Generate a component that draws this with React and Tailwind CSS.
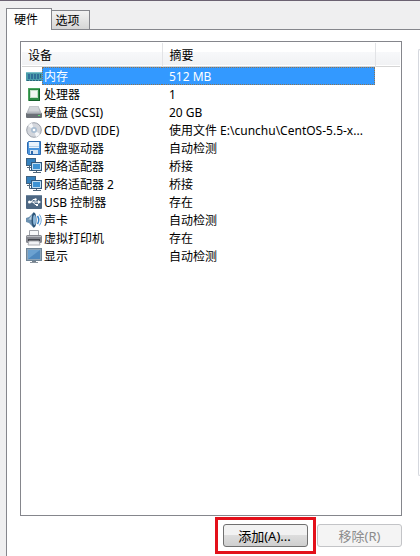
/**
 * HardwareSettings: virtual machine settings, "hardware" tab.
 *
 * Device table with its add / remove buttons.
 */

const DEVICES = [
  { name: '内存', summary: '512 MB', Icon: MemoryIcon },
  { name: '处理器', summary: '1', Icon: CpuIcon },
  { name: '硬盘 (SCSI)', summary: '20 GB', Icon: DiskIcon },
  { name: 'CD/DVD (IDE)', summary: '使用文件 E:\\cunchu\\CentOS-5.5-x...', Icon: DiscIcon },
  { name: '软盘驱动器', summary: '自动检测', Icon: FloppyIcon },
  { name: '网络适配器', summary: '桥接', Icon: NetworkIcon },
  { name: '网络适配器 2', summary: '桥接', Icon: NetworkIcon },
  { name: 'USB 控制器', summary: '存在', Icon: UsbIcon },
  { name: '声卡', summary: '自动检测', Icon: SoundIcon },
  { name: '虚拟打印机', summary: '存在', Icon: PrinterIcon },
  { name: '显示', summary: '自动检测', Icon: DisplayIcon },
]

export default function App() {
  return (
    <main className="flex h-screen flex-col border-t border-[#6b6272] bg-[#efeff0] pl-[6px] pt-[7px] font-['Noto_Sans','Noto_Sans_CJK_SC',sans-serif] text-[12px] leading-[18px] text-black">
      <Tabs />
      <div className="flex flex-1 border-l border-t border-[#85868c] bg-white">
        <section aria-label="硬件" className="flex flex-1 flex-col pl-[13px] pt-[11px]">
          <div className="flex-1 border border-[#85868c] p-px">
            <DeviceTable />
          </div>
          <Actions />
        </section>
        {/* Left edge of the detail pane */}
        <div className="mb-[80px] ml-[16px] mt-[19px] w-[2px] rounded-l-sm border-y border-l border-[#d5d8de]" />
      </div>
    </main>
  )
}

function Tabs() {
  return (
    <div role="tablist" className="flex items-end">
      <button role="tab" aria-selected="true" className="relative -mb-px h-[22px] w-[46px] border-x border-t border-[#85868c] bg-white pr-[6px] pt-px">
        硬件
      </button>
      <button role="tab" aria-selected="false" className="h-[19px] w-[38px] border-r border-t border-[#85868c] bg-linear-to-b from-[#f2f2f2] to-[#d6d6d6] pr-[6px] pt-px">
        选项
      </button>
    </div>
  )
}

function DeviceTable() {
  return (
    <table className="w-full table-fixed border-collapse text-left">
      <colgroup>
        <col className="w-[140px]" />
        <col className="w-[213px]" />
        <col />
      </colgroup>
      <thead>
        <tr className="h-[23px] border-b border-[#d5d5d5] bg-linear-to-b from-white from-40% via-[#f7f8fa] via-40% to-[#f1f2f4]">
          <th className="border-r border-[#e2e3e6] pb-0 pl-[6px] pt-[4px] font-normal">设备</th>
          <th className="border-r border-[#e2e3e6] pb-0 pl-[7px] pt-[4px] font-normal">摘要</th>
          <th />
        </tr>
      </thead>
      <tbody>
        <tr className="h-px" />
        {DEVICES.map((device, i) => (
          <DeviceRow key={device.name} device={device} selected={i === 0} />
        ))}
      </tbody>
    </table>
  )
}

function DeviceRow({ device, selected }) {
  const { name, summary, Icon } = device
  const highlight = selected ? 'border-[#8a7355] bg-[#3399ff] text-white' : 'border-transparent'
  return (
    <tr aria-selected={selected} className="h-[18px] leading-[18px]">
      <td className="p-0">
        <div className="flex h-[18px] items-center pl-[4px]">
          <Icon />
          <span className={`h-[18px] flex-1 whitespace-nowrap border-y border-l border-dotted pl-px ${highlight}`}>
            {name}
          </span>
        </div>
      </td>
      <td className="p-0">
        <div className={`h-[18px] whitespace-nowrap border-y border-r border-dotted pl-[7px] ${highlight}`}>{summary}</div>
      </td>
      <td />
    </tr>
  )
}

function Actions() {
  return (
    <div className="flex items-center justify-end pb-[2px] pt-px">
      <div className="border-[3px] border-[#e3101a] px-[5px] py-[4px]">
        <button className="block h-[23px] w-[85px] rounded-[3px] border border-[#707070] bg-linear-to-b from-[#f2f2f2] from-50% via-[#dddddd] via-50% to-[#cfcfcf] pr-[2px] text-[13px]">
          添加(A)...
        </button>
      </div>
      <button disabled className="ml-px h-[23px] w-[85px] rounded-[3px] border border-[#c3c4c7] bg-[#f4f4f4] text-[13px] text-[#8b8b8b]">
        移除(R)
      </button>
    </div>
  )
}

function IconFrame({ children }) {
  return (
    <svg width="16" height="16" viewBox="0 0 16 16" className="shrink-0" aria-hidden="true">
      {children}
    </svg>
  )
}

function MemoryIcon() {
  return (
    <IconFrame>
      <rect x="0" y="4" width="16" height="9" fill="#4c9daa" />
      <path d="M0 4.5h16" stroke="#7bc0ca" />
      <path d="M2 6h2v5H2zM5 6h2v5H5zM8 6h2v5H8zM11 6h2v5h-2z" fill="#2f6f98" />
      <path d="M1 12.5h14" stroke="#2b6678" strokeDasharray="2 1" />
      <path d="M14.5 6v4" stroke="#2b6678" />
    </IconFrame>
  )
}

function CpuIcon() {
  return (
    <IconFrame>
      <rect x="2" y="2" width="12" height="13" rx="1" fill="#2c8a45" />
      <path d="M2.5 14V2.5H14" fill="none" stroke="#4aa45e" />
      <rect x="4.5" y="4.5" width="7" height="7" fill="#f2f6f2" stroke="#c3dfc7" />
      <path d="M3 14.5h11M13.5 3v11" stroke="#14602a" />
    </IconFrame>
  )
}

function DiskIcon() {
  return (
    <IconFrame>
      <path d="M3.5 2h9L16 10H0z" fill="#b5b9bf" />
      <path d="M4 2.5h8l1.5 5h-11z" fill="#d3d6da" />
      <rect x="0" y="9" width="16" height="5" rx="1" fill="#6b7077" />
      <path d="M1 9.5h14" stroke="#9a9fa6" />
      <path d="M12 11.5h2" stroke="#5fdd72" />
    </IconFrame>
  )
}

function DiscIcon() {
  return (
    <IconFrame>
      <circle cx="8" cy="8" r="7.3" fill="#d3d6dc" stroke="#9ba0aa" />
      <path d="M8 8 2 4a7 7 0 0 1 4-3zM8 8l6 4a7 7 0 0 1-4 3z" fill="#f7f8fa" />
      <circle cx="8" cy="8" r="3" fill="#a9bdd2" />
      <circle cx="8" cy="8" r="1.3" fill="#fff" />
    </IconFrame>
  )
}

function FloppyIcon() {
  return (
    <IconFrame>
      <path d="M1.5 2.5 2.5 1.5h12v13h-12l-1-1z" fill="#4c95dc" stroke="#2d69ae" />
      <rect x="3" y="2" width="10" height="6" fill="#eaf3fc" />
      <path d="M3 6.5h10" stroke="#b4cfe8" />
      <rect x="4" y="10" width="8" height="4" fill="#d7e5f2" />
      <path d="M5 11h2v3H5z" fill="#2d69ae" />
    </IconFrame>
  )
}

function NetworkIcon() {
  return (
    <IconFrame>
      <rect x=".5" y=".5" width="9" height="7" fill="#3480bd" stroke="#3f6180" />
      <path d="M3.5 8v4.5H6M1 9.5h4" fill="none" stroke="#50667b" />
      <rect x="5.500" y="4.500" width="10" height="8" fill="#3f93d3" stroke="#34587a" />
      <path d="M6.500 11.500v-6h8v6z" fill="none" stroke="#c3dff2" />
      <path d="M10.500 13v2M7 14.500h8" stroke="#50667b" />
    </IconFrame>
  )
}

function UsbIcon() {
  return (
    <IconFrame>
      <rect x="0" y="1" width="16" height="14" rx="1" fill="#4d6783" />
      <path d="M1 1.500h14" stroke="#7289a1" />
      <path d="M3 8h10M5 8l2-2.500h2M7 8l2 2.500h2" fill="none" stroke="#fff" />
      <circle cx="3.500" cy="8" r="1.500" fill="#fff" />
      <path d="m12 6 3 2-3 2z" fill="#fff" />
      <circle cx="9.500" cy="5.500" r="1.200" fill="#fff" />
      <path d="M10 10h2v2h-2z" fill="#fff" />
    </IconFrame>
  )
}

function SoundIcon() {
  return (
    <IconFrame>
      <path d="M0 6 3 5l5-5v16l-5-5-3-1z" fill="#6b90b0" />
      <path d="M1 7h2l3-4v5z" fill="#bdd3e4" />
      <ellipse cx="8" cy="8" rx="2.500" ry="7.500" fill="#2d5578" />
      <ellipse cx="8.500" cy="8" rx="1.500" ry="5" fill="#8bb6d9" />
      <path d="M11.500 4q2.500 4 0 8" fill="none" stroke="#2f7fc8" strokeWidth="1.500" />
      <path d="M13.500 2.500q3.500 5.500 0 11" fill="none" stroke="#6faade" />
    </IconFrame>
  )
}

function PrinterIcon() {
  return (
    <IconFrame>
      <path d="M3.500 7V.500h9V7" fill="#f7f8fa" stroke="#a0a3aa" />
      <rect x="0" y="5" width="16" height="8" rx="1.500" fill="#85878f" />
      <path d="M1 6.500h14" stroke="#b8bac0" />
      <path d="M2 9h12v2H2z" fill="#42444c" />
      <path d="M3 11h10l1 4H2z" fill="#f1f2f5" stroke="#a9abb1" />
    </IconFrame>
  )
}

function DisplayIcon() {
  return (
    <IconFrame>
      <rect x=".5" y=".500" width="15" height="12" fill="#8fa5b8" stroke="#6f8496" />
      <path d="M2 2h12v9H2z" fill="#4f88bd" />
      <path d="M2 2h12L2 11z" fill="#6ba1d0" />
      <path d="M6 13h4v1H6z" fill="#74808c" />
      <path d="M4 14.500h8" stroke="#8a949e" />
    </IconFrame>
  )
}
